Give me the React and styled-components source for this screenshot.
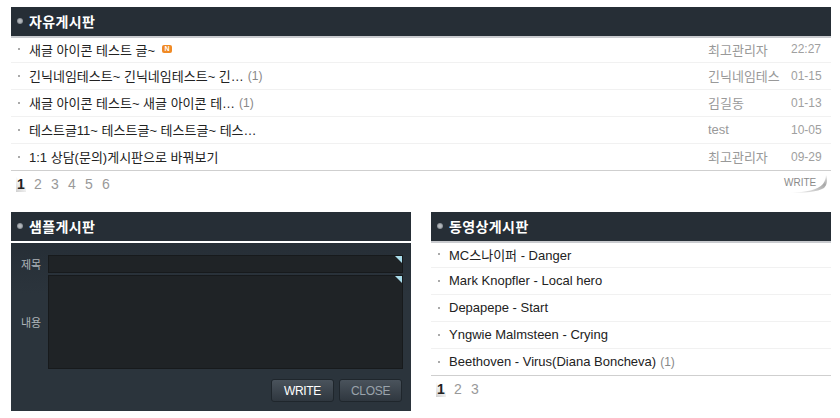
import React from 'react'
import styled, { createGlobalStyle } from 'styled-components'

const GlobalStyle = createGlobalStyle`
  html, body { margin: 0; padding: 0; background: #fff; }
  body { font-family: "Liberation Sans", "Noto Sans CJK KR", sans-serif; font-size: 13px; }
`

const Page = styled.div`
  width: 840px;
  height: 418px;
  box-sizing: border-box;
  padding: 7px 9px 0 11px;
  overflow: hidden;
`
const BottomRow = styled.div`
  display: flex;
  gap: 20px;
  margin-top: 15px;
`
const Board = styled.section`
  flex: 1;
  min-width: 0;
`
const Header = styled.h2`
  margin: 0;
  height: ${p => (p.$dark ? 30 : 31)}px;
  box-sizing: border-box;
  background: #262e36;
  display: flex;
  align-items: center;
  gap: 6px;
  padding: 0 0 2px 6px;
  border-bottom: ${p => (p.$dark ? '1px solid #fff' : '2px solid #c9cbcf')};
  color: #fff;
  font-size: 14px;
  letter-spacing: 0.4px;
  font-weight: 700;
`
const Dot = styled.i`
  width: 6px;
  height: 6px;
  border-radius: 50%;
  background: radial-gradient(circle, #b4b8bc 30%, #59616a 100%);
`
const List = styled.ul`
  list-style: none;
  margin: 0;
  padding: 0;
  border-bottom: 1px solid #cfcfcf;
`
const Row = styled.li`
  height: ${p => (p.$first ? 24 : 27)}px;
  box-sizing: border-box;
  display: flex;
  align-items: center;
  padding-left: 7px;
  padding-bottom: ${p => (p.$first ? 2 : 1)}px;
  border-top: ${p => (p.$first ? '0' : '1px solid #f1f1f1')};
  color: #222;
`
const Bullet = styled.i`
  width: 2px;
  height: 2px;
  background: #aaa;
  margin-right: 9px;
  flex: none;
`
const Title = styled.span`
  flex: 1;
  min-width: 0;
  white-space: nowrap;
  display: flex;
  align-items: center;
`
const Count = styled.span`
  color: #888;
  font-size: 12px;
  margin-left: 4px;
`
const NewBadge = styled.b`
  width: 10px;
  height: 8px;
  border-radius: 2px;
  background: #f08a24;
  color: #fff;
  font: 700 7px/8px "Liberation Sans", sans-serif;
  text-align: center;
  margin-left: 7px;
`
const Author = styled.span`
  width: 83px;
  color: #999;
  white-space: nowrap;
  overflow: hidden;
  flex: none;
`
const DateCell = styled.span`
  width: 40px;
  color: #a0a0a0;
  flex: none;
  font-size: 12px;
`
const Pager = styled.div`
  height: 26px;
  display: flex;
  align-items: center;
  justify-content: space-between;
  padding: 0 3px 0 5px;
`
const Pages = styled.div`
  display: flex;
  gap: 7px;
`
const PageNum = styled.a`
  width: 10px;
  height: 15px;
  text-align: center;
  font: ${p => (p.$on ? 700 : 400)} 14px/15px "Liberation Sans", sans-serif;
  color: ${p => (p.$on ? '#222' : '#999')};
  background: ${p => (p.$on ? 'linear-gradient(45deg, #cfcfcf, #fff 65%)' : 'none')};
`
const WriteMark = styled.a`
  position: relative;
  width: 44px;
  height: 20px;
  color: #8a8a8a;
  font: 10px/18px "Liberation Sans", sans-serif;
  svg { position: absolute; right: 0; bottom: 0; }
`
const Form = styled.form`
  margin: 1px 0 0;
  height: 168px;
  box-sizing: border-box;
  background: linear-gradient(#262e36, #2b343c 30%);
  padding: 12px 8px 9px 10px;
  display: flex;
  flex-direction: column;
`
const Field = styled.div`
  display: flex;
  align-items: center;
  margin-bottom: ${p => p.$gap || 0}px;
`
const Label = styled.label`
  width: 27px;
  color: #aeb4b9;
  font-size: 11px;
  flex: none;
`
const InputBox = styled.div`
  position: relative;
  flex: 1;
  height: ${p => p.$h}px;
  background: #1f2326;
  border: 1px solid #171a1c;
  box-sizing: border-box;
  &::after {
    content: '';
    position: absolute;
    top: 0;
    right: 0;
    border-top: 7px solid #a9dcea;
    border-left: 7px solid transparent;
  }
`
const Buttons = styled.div`
  display: flex;
  justify-content: flex-end;
  gap: 5px;
  margin-top: 10px;
  padding-right: 1px;
`
const FormButton = styled.button`
  width: 63px;
  height: 23px;
  padding: 0;
  border: 1px solid #1f262c;
  border-radius: 3px;
  background: linear-gradient(#4a535c, #2f373f);
  color: ${p => (p.$dim ? '#9aa3ab' : '#fff')};
  font: 12px "Liberation Sans", sans-serif;
  letter-spacing: -0.3px;
`

const topRows = [
  { title: '새글 아이콘 테스트 글~', isNew: true, author: '최고관리자', date: '22:27' },
  { title: '긴닉네임테스트~ 긴닉네임테스트~ 긴…', count: 1, author: '긴닉네임테스', date: '01-15' },
  { title: '새글 아이콘 테스트~ 새글 아이콘 테…', count: 1, author: '김길동', date: '01-13' },
  { title: '테스트글11~ 테스트글~ 테스트글~ 테스…', author: 'test', date: '10-05' },
  { title: '1:1 상담(문의)게시판으로 바꿔보기', author: '최고관리자', date: '09-29' },
]
const videoRows = [
  { title: 'MC스나이퍼 - Danger' },
  { title: 'Mark Knopfler - Local hero' },
  { title: 'Depapepe - Start' },
  { title: 'Yngwie Malmsteen - Crying' },
  { title: 'Beethoven - Virus(Diana Boncheva)', count: 1 },
]

const BoardList = ({ rows }) => (
  <List>
    {rows.map((r, i) => (
      <Row key={r.title} $first={i === 0}>
        <Bullet />
        <Title>
          {r.title}
          {r.isNew && <NewBadge>N</NewBadge>}
          {r.count && <Count>({r.count})</Count>}
        </Title>
        {r.author && <Author>{r.author}</Author>}
        {r.date && <DateCell>{r.date}</DateCell>}
      </Row>
    ))}
  </List>
)

const PageLinks = ({ total }) => (
  <Pages>
    {Array.from({ length: total }, (_, i) => (
      <PageNum key={i} $on={i === 0}>{i + 1}</PageNum>
    ))}
  </Pages>
)

const App = () => (
  <Page>
    <GlobalStyle />
    <Board>
      <Header><Dot />자유게시판</Header>
      <BoardList rows={topRows} />
      <Pager>
        <PageLinks total={6} />
        <WriteMark>
          WRITE
          <svg width="44" height="20" viewBox="0 0 44 20">
            <defs>
              <linearGradient id="swoosh" x1="0" y1="1" x2="1" y2="0">
                <stop offset="0" stopColor="#fff" />
                <stop offset="0.7" stopColor="#a8a8a8" />
                <stop offset="1" stopColor="#eee" />
              </linearGradient>
            </defs>
            <path d="M6 19 C22 18 34 16 39 10 C41 7 42 4 42 1 C44 6 43 11 40 14 C34 18 20 19 6 19 Z" fill="url(#swoosh)" />
          </svg>
        </WriteMark>
      </Pager>
    </Board>
    <BottomRow>
      <Board>
        <Header $dark><Dot />샘플게시판</Header>
        <Form>
          <Field $gap={2}>
            <Label>제목</Label>
            <InputBox $h={18} />
          </Field>
          <Field>
            <Label>내용</Label>
            <InputBox $h={94} />
          </Field>
          <Buttons>
            <FormButton type="button">WRITE</FormButton>
            <FormButton type="button" $dim>CLOSE</FormButton>
          </Buttons>
        </Form>
      </Board>
      <Board>
        <Header><Dot />동영상게시판</Header>
        <BoardList rows={videoRows} />
        <Pager>
          <PageLinks total={3} />
        </Pager>
      </Board>
    </BottomRow>
  </Page>
)

export default App
